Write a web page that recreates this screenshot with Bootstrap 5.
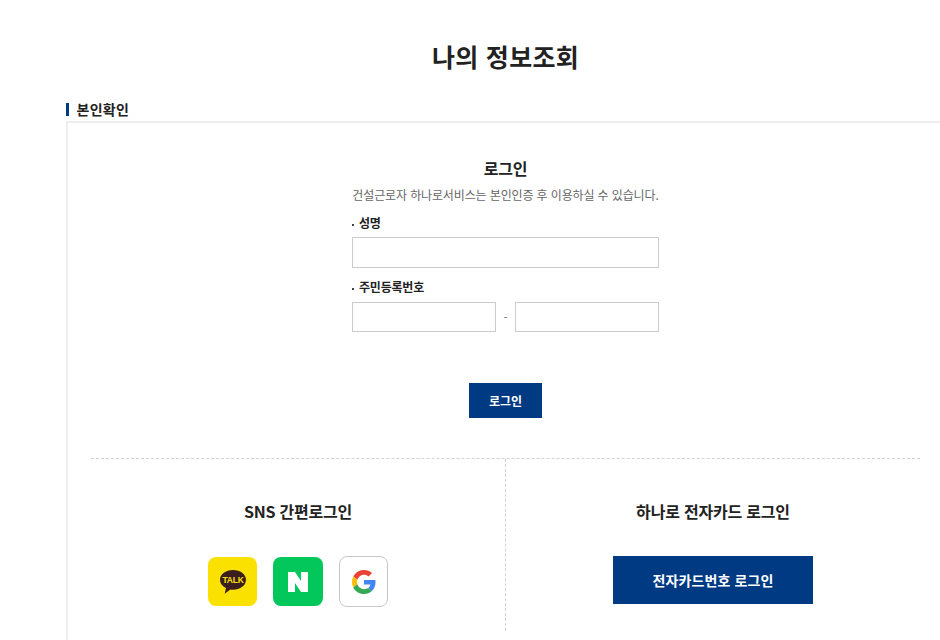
<!DOCTYPE html>
<html lang="ko">
<head>
<meta charset="utf-8">
<title>나의 정보조회</title>
<link rel="stylesheet" href="https://cdn.jsdelivr.net/npm/bootstrap@5.3.0/dist/css/bootstrap.min.css">
<style>
html,body{height:640px;overflow:hidden;background:#fff}
body{font-family:"Noto Sans CJK KR","Noto Sans",sans-serif;color:#222;letter-spacing:-.2px}
.page-wrap{width:879px;margin-left:66px}
.page-title{font-size:25px;font-weight:700;line-height:36px;text-align:center;margin:0;padding-top:38px;color:#222;letter-spacing:.3px}
.sec-title{font-size:14px;font-weight:700;line-height:20px;margin:25px 0 0;padding-left:10.500px;position:relative;color:#222;letter-spacing:.3px}
.sec-title::before{content:"";position:absolute;left:0;top:4px;width:3px;height:13px;background:#003a82}
.auth-box{border:2px solid #eee;border-bottom:0;margin-top:2px;height:530px;padding:0 23px}
.login-form{width:307px;margin:0 auto;padding-top:34px}
.login-head{font-size:16px;font-weight:700;line-height:22px;text-align:center;margin:0}
.login-desc{font-size:12px;line-height:18px;color:#666;text-align:center;margin:7px 0 0;white-space:nowrap;letter-spacing:-.13px}
.name-row{margin-top:10px}
.reg-row{margin-top:10px}
.fld-label{display:block;font-size:12px;font-weight:700;line-height:18px;margin:0 0 5px;color:#222}
.reg-row .fld-label{margin-bottom:6px}
.fld-label::before{content:"";display:inline-block;width:2px;height:2px;background:#444;margin-right:5px;vertical-align:middle}
.fld-input{display:block;width:100%;border:1px solid #ccc;background:#fff;height:31px;border-radius:0;padding:0 8px}
.reg-row .fld-input{height:30px;width:144px}
.fld-input:focus{outline:none}
.dash{width:19px;text-align:center;color:#777;font-size:12px}
.submit-row{margin-top:51px}
.btn-navy{background:#003a82;color:#fff;border:0;border-radius:0;font-weight:700;display:flex;align-items:center;justify-content:center}
.btn-login{width:73px;height:35px;font-size:12px}
.btn-card{width:200px;height:48px;font-size:14px;letter-spacing:.1px}
.split{border-top:1px dashed #d2d2d2;margin-top:40px;height:173px}
.split-col{flex:1 1 0;text-align:center}
.split-left{flex:0 0 414px}
.split-col + .split-col{border-left:1px dashed #d2d2d2}
.split-head{font-size:16px;font-weight:700;line-height:22px;margin:41px 0 0;color:#222}
.tile-row{gap:16px;margin-top:35px}
.card-row{margin-top:34px}
.sns-tile{width:49px;height:49px;border-radius:8px;display:flex;align-items:center;justify-content:center}
.tile-kakao{background:#fae100}
.tile-naver{background:#03c75a;width:50px}
.tile-google{background:#fff;border:1px solid #c8c8c8;height:51px;margin-top:-1px}
</style>
</head>
<body>
<main class="page-wrap">
  <h1 class="page-title">나의 정보조회</h1>
  <h2 class="sec-title">본인확인</h2>
  <section class="auth-box">
    <form class="login-form" onsubmit="return false">
      <h3 class="login-head">로그인</h3>
      <p class="login-desc">건설근로자 하나로서비스는 본인인증 후 이용하실 수 있습니다.</p>
      <div class="name-row">
        <label class="fld-label" for="nm">성명</label>
        <input class="fld-input" id="nm" type="text">
      </div>
      <div class="reg-row">
        <label class="fld-label" for="r1">주민등록번호</label>
        <div class="d-flex align-items-center">
          <input class="fld-input" id="r1" type="text" aria-label="앞자리">
          <span class="dash flex-shrink-0">-</span>
          <input class="fld-input" id="r2" type="text" aria-label="뒷자리">
        </div>
      </div>
      <div class="d-flex justify-content-center submit-row">
        <button class="btn-navy btn-login" type="submit">로그인</button>
      </div>
    </form>
    <div class="split d-flex">
      <div class="split-col split-left">
        <h3 class="split-head">SNS 간편로그인</h3>
        <div class="d-flex justify-content-center align-items-start tile-row">
          <div class="sns-tile tile-kakao" aria-label="카카오">
            <svg width="30" height="28" viewBox="0 0 30 28"><path d="M15 2C7.800 2 2 6.400 2 11.800c0 3.500 2.400 6.500 6 8.200l-1.300 5.800 5.600-4.200c.9.100 1.800.2 2.700.2 7.200 0 13-4.400 13-10S22.200 2 15 2z" fill="#3c1e1e"/><text x="15" y="15" text-anchor="middle" font-family="Liberation Sans,sans-serif" font-size="8.500" font-weight="700" fill="#fae100">TALK</text></svg>
          </div>
          <div class="sns-tile tile-naver" aria-label="네이버">
            <svg width="20" height="20" viewBox="0 0 20 20"><path d="M0 0h7l6 9V0h7v20h-7L7 11v9H0z" fill="#fff"/></svg>
          </div>
          <div class="sns-tile tile-google" aria-label="구글">
            <svg width="24" height="24" viewBox="0 0 48 48"><path fill="#EA4335" d="M24 9.500c3.500 0 6.700 1.200 9.200 3.600l6.900-6.900C35.900 2.400 30.500 0 24 0 14.600 0 6.500 5.400 2.600 13.200l8 6.200C12.500 13.700 17.800 9.500 24 9.500z"/><path fill="#4285F4" d="M47 24.500c0-1.600-.1-3.100-.4-4.500H24v9h12.900c-.6 3-2.200 5.500-4.800 7.200l7.700 6c4.500-4.200 7.200-10.300 7.200-17.700z"/><path fill="#FBBC05" d="M10.500 28.600c-.5-1.400-.8-3-.8-4.600s.3-3.200.8-4.600l-8-6.200C.9 16.500 0 20.100 0 24s.9 7.500 2.600 10.800l7.900-6.200z"/><path fill="#34A853" d="M24 48c6.500 0 11.900-2.100 15.900-5.800l-7.700-6c-2.200 1.400-4.900 2.300-8.200 2.300-6.200 0-11.500-4.200-13.400-9.900l-8 6.200C6.500 42.600 14.600 48 24 48z"/></svg>
          </div>
        </div>
      </div>
      <div class="split-col">
        <h3 class="split-head">하나로 전자카드 로그인</h3>
        <div class="d-flex justify-content-center card-row">
          <button class="btn-navy btn-card" type="button">전자카드번호 로그인</button>
        </div>
      </div>
    </div>
  </section>
</main>
<script src="https://cdn.jsdelivr.net/npm/bootstrap@5.3.0/dist/js/bootstrap.bundle.min.js"></script>
</body>
</html>
